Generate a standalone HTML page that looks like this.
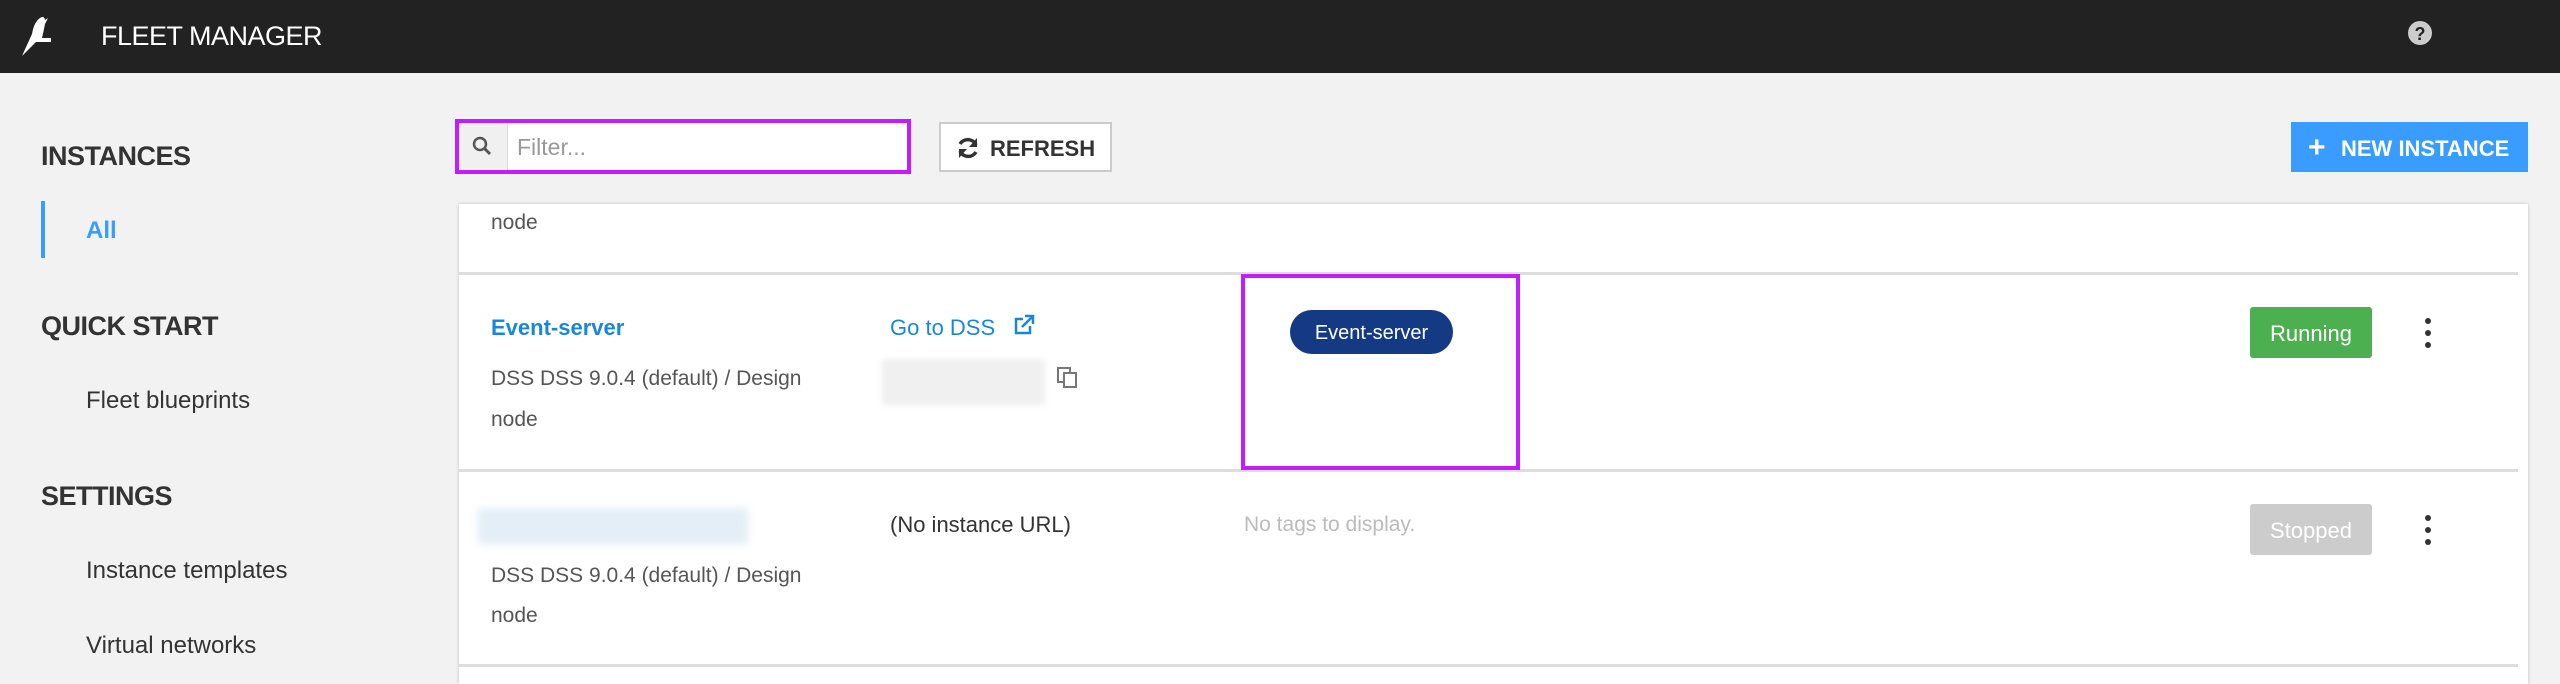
<!DOCTYPE html>
<html><head><style>
*{margin:0;padding:0;box-sizing:border-box}
body{width:2560px;height:676px;background:#f2f2f2;font-family:"Liberation Sans",sans-serif;position:relative;overflow:hidden;color:#333}
.a{position:absolute;white-space:nowrap}
.hdr{left:0;top:0;width:2560px;height:73px;background:#222}
.side-h{font-weight:bold;font-size:27px;color:#333;letter-spacing:-0.5px}
.side-i{font-size:24px;color:#333}
.t{font-size:21px;color:#555}
.link{font-size:22px;color:#1a87d6}
</style></head><body>
<div class="a hdr"></div>
<svg class="a" style="left:18px;top:14px" width="48" height="44" viewBox="0 0 48 44"><path d="M4 42 L14 20 Q16 8 22 4 Q26 1 27 6 L30 4 L27 10 Q25 20 24 24 L33 24 L33 28 L18 28 Z" fill="#fff"/></svg>
<div class="a" style="left:101px;top:21px;font-size:27px;color:#fff;letter-spacing:-0.5px">FLEET MANAGER</div>
<svg class="a" style="left:2407px;top:20px" width="26" height="26"><circle cx="13" cy="13" r="12" fill="#ccc"/><text x="13" y="20" text-anchor="middle" font-family="Liberation Sans" font-weight="bold" font-size="18" fill="#222">?</text></svg>

<div class="a side-h" style="left:41px;top:141px">INSTANCES</div>
<div class="a" style="left:41px;top:201px;width:4px;height:57px;background:#3b9cff"></div>
<div class="a" style="left:86px;top:217px;font-size:24px;font-weight:bold;color:#3b9cff">All</div>
<div class="a side-h" style="left:41px;top:311px">QUICK START</div>
<div class="a side-i" style="left:86px;top:387px">Fleet blueprints</div>
<div class="a side-h" style="left:41px;top:481px">SETTINGS</div>
<div class="a side-i" style="left:86px;top:557px">Instance templates</div>
<div class="a side-i" style="left:86px;top:632px">Virtual networks</div>

<div class="a" style="left:455px;top:119px;width:456px;height:55px;border:4px solid #c51bff;background:#fff"></div>
<div class="a" style="left:459px;top:123px;width:49px;height:47px;background:#f0f0f0;border-right:1px solid #ddd"></div>
<svg class="a" style="left:470px;top:134px" width="26" height="26"><circle cx="10" cy="10" r="6" stroke="#555" stroke-width="2.5" fill="none"/><line x1="14" y1="14" x2="20" y2="20" stroke="#555" stroke-width="3"/></svg>
<div class="a" style="left:517px;top:134px;font-size:23px;color:#999">Filter...</div>

<div class="a" style="left:939px;top:122px;width:173px;height:50px;border:2px solid #ccc;background:#fff"></div>
<svg class="a" style="left:955px;top:135px" width="26" height="26" viewBox="0 0 26 26"><path d="M21 10 A9 9 0 0 0 5 9" stroke="#333" stroke-width="3.5" fill="none"/><path d="M22 3 L22 12 L14 12Z" fill="#333"/><path d="M5 16 A9 9 0 0 0 21 17" stroke="#333" stroke-width="3.5" fill="none"/><path d="M4 23 L4 14 L12 14Z" fill="#333"/></svg>
<div class="a" style="left:990px;top:136px;font-size:22px;font-weight:bold;color:#333">REFRESH</div>

<div class="a" style="left:2291px;top:122px;width:237px;height:50px;background:#3b9cff"></div>
<div class="a" style="left:2308px;top:131px;font-size:30px;font-weight:bold;color:#fff">+</div>
<div class="a" style="left:2341px;top:136px;font-size:22px;font-weight:bold;color:#fff">NEW INSTANCE</div>

<div class="a" style="left:459px;top:204px;width:2069px;height:480px;background:#fff;box-shadow:0 0 3px #bbb"></div>
<div class="a" style="left:459px;top:272px;width:2059px;height:3px;background:#ddd"></div>
<div class="a" style="left:459px;top:469px;width:2059px;height:3px;background:#ddd"></div>
<div class="a" style="left:459px;top:664px;width:2059px;height:3px;background:#ddd"></div>

<div class="a t" style="left:491px;top:211px">node</div>

<div class="a link" style="left:491px;top:315px;font-weight:bold">Event-server</div>
<div class="a t" style="left:491px;top:367px">DSS DSS 9.0.4 (default) / Design</div>
<div class="a t" style="left:491px;top:408px">node</div>
<div class="a link" style="left:890px;top:315px">Go to DSS</div>
<svg class="a" style="left:1012px;top:313px" width="24" height="24" viewBox="0 0 24 24"><path d="M18 13 V20 H4 V6 H11" stroke="#1a87d6" stroke-width="2.5" fill="none"/><path d="M10 14 L20 4 M13 3 H21 V11" stroke="#1a87d6" stroke-width="2.5" fill="none"/></svg>
<div class="a" style="left:882px;top:359px;width:163px;height:46px;background:#f0f0f0;filter:blur(3px)"></div>
<svg class="a" style="left:1056px;top:366px" width="24" height="24"><rect x="2" y="2" width="12" height="14" stroke="#777" stroke-width="2" fill="#fff"/><rect x="8" y="7" width="12" height="14" stroke="#777" stroke-width="2" fill="#fff"/></svg>
<div class="a" style="left:1241px;top:274px;width:279px;height:196px;border:4px solid #c51bff"></div>
<div class="a" style="left:1290px;top:310px;width:163px;height:44px;border-radius:22px;background:#143a84;color:#fff;font-size:20px;text-align:center;line-height:46px">Event-server</div>
<div class="a" style="left:2250px;top:307px;width:122px;height:51px;border-radius:3px;background:#4caf50;color:#fff;font-size:22px;text-align:center;line-height:53px">Running</div>
<svg class="a" style="left:2420px;top:317px" width="16" height="34"><circle cx="8" cy="4" r="3" fill="#333"/><circle cx="8" cy="16" r="3" fill="#333"/><circle cx="8" cy="28" r="3" fill="#333"/></svg>

<div class="a" style="left:478px;top:508px;width:270px;height:36px;background:#e3eef6;filter:blur(4px)"></div>
<div class="a" style="left:890px;top:512px;font-size:22px;color:#333">(No instance URL)</div>
<div class="a" style="left:1244px;top:513px;font-size:21px;color:#bbb">No tags to display.</div>
<div class="a t" style="left:491px;top:564px">DSS DSS 9.0.4 (default) / Design</div>
<div class="a t" style="left:491px;top:604px">node</div>
<div class="a" style="left:2250px;top:504px;width:122px;height:51px;border-radius:3px;background:#ccc;color:#fff;font-size:22px;text-align:center;line-height:53px">Stopped</div>
<svg class="a" style="left:2420px;top:514px" width="16" height="34"><circle cx="8" cy="4" r="3" fill="#333"/><circle cx="8" cy="16" r="3" fill="#333"/><circle cx="8" cy="28" r="3" fill="#333"/></svg>
</body></html>
